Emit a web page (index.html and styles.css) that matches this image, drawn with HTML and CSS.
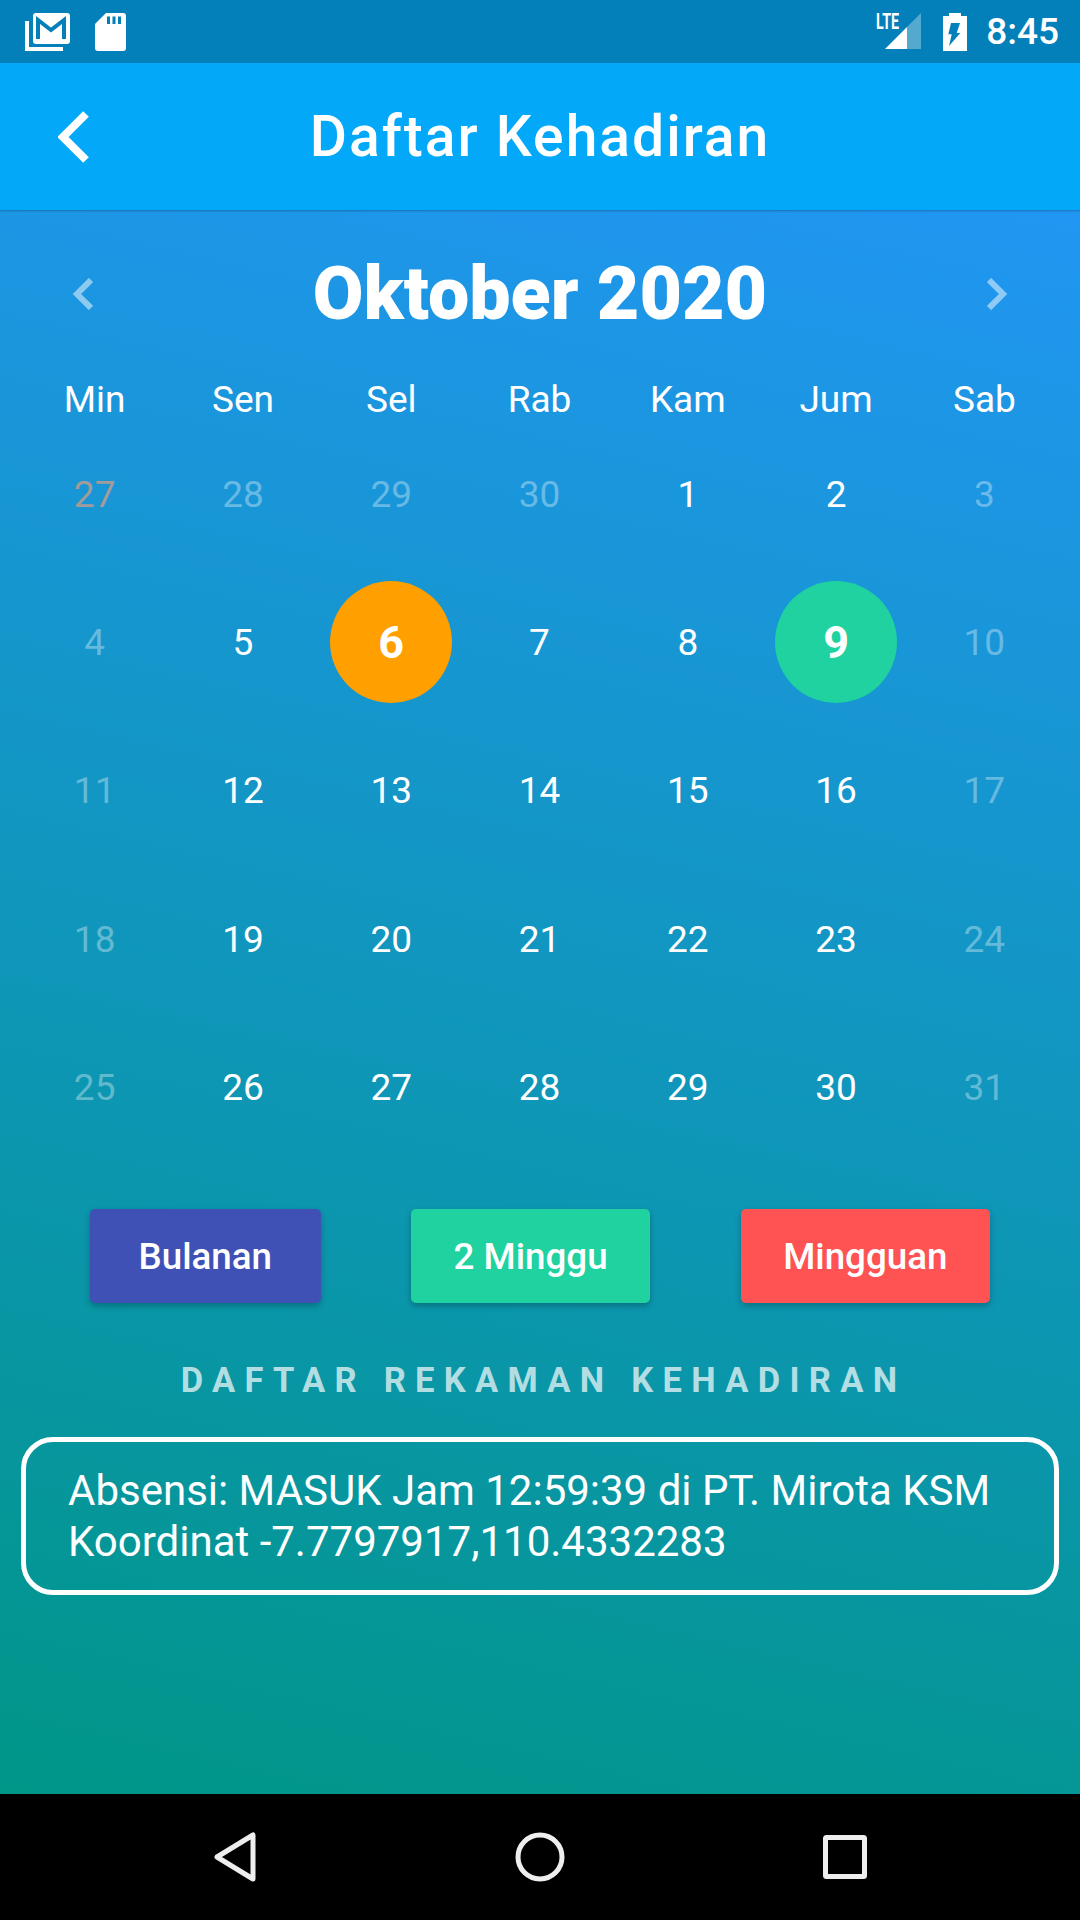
FILE: index.html
```html
<!DOCTYPE html>
<html lang="en">
<head>
    <meta charset="UTF-8">
    <meta name="viewport" content="width=device-width, initial-scale=1.0">
    <title>Daftar Kehadiran</title>
    <link rel="stylesheet" href="styles.css">
</head>
<body>
    <div class="screen">

        <div class="status-bar">
            <svg class="icon-gmail" width="45" height="38" viewBox="0 0 45 38">
                <path d="M2 8V36H38" fill="none" stroke="#fff" stroke-width="4"/>
                <rect x="8" y="0" width="37" height="31" rx="3" fill="#fff"/>
                <path d="M13 26V7L26 17L39 7V26" fill="none" stroke="#0380b9" stroke-width="4"/>
            </svg>
            <svg class="icon-sd" width="31" height="38" viewBox="0 0 31 38">
                <path d="M11 0H28Q31 0 31 3V35Q31 38 28 38H3Q0 38 0 35V11Z" fill="#fff"/>
                <path d="M12 3.500H15V11H12ZM17.500 3.500H20.500V11H17.500ZM23 3.500H26V11H23Z" fill="#0380b9"/>
            </svg>
            <div class="status-right">
                <svg class="icon-signal" width="46" height="37" viewBox="0 0 46 37">
                    <path d="M45 0V36H31V14Z" fill="#fff" opacity="0.32"/>
                    <path d="M31 14V36H9Z" fill="#fff"/>
                    <text class="lte" x="0" y="16" textLength="23" lengthAdjust="spacingAndGlyphs">LTE</text>
                </svg>
                <svg class="icon-battery" width="24" height="38" viewBox="0 0 24 38">
                    <path d="M6 0H18V3H24V38H0V3H6Z" fill="#fff"/>
                    <path d="M8 10H17L13.700 20H17.300L6 33L8.700 21.300H5.300Z" fill="#0380b9"/>
                </svg>
                <span class="clock">8:45</span>
            </div>
        </div>

        <div class="app-bar">
            <svg class="back" width="31" height="52" viewBox="0 0 31 52">
                <path d="M28 3L5 26L28 49" fill="none" stroke="#fff" stroke-width="8"/>
            </svg>
            <h1>Daftar Kehadiran</h1>
        </div>

        <div class="content">
            <div class="month-row">
                <svg class="arrow" width="20" height="32" viewBox="0 0 20 32">
                    <path d="M18 2L4 16L18 30" fill="none" stroke="#fff" stroke-width="6"/>
                </svg>
                <div class="month">Oktober 2020</div>
                <svg class="arrow arrow-next" width="20" height="32" viewBox="0 0 20 32">
                    <path d="M2 2L16 16L2 30" fill="none" stroke="#fff" stroke-width="6"/>
                </svg>
            </div>

            <div class="week-names">
                <div>Min</div><div>Sen</div><div>Sel</div><div>Rab</div><div>Kam</div><div>Jum</div><div>Sab</div>
            </div>

            <div class="days">
                <div class="day prev-sun">27</div>
                <div class="day off">28</div>
                <div class="day off">29</div>
                <div class="day off">30</div>
                <div class="day">1</div>
                <div class="day">2</div>
                <div class="day off">3</div>

                <div class="day off">4</div>
                <div class="day">5</div>
                <div class="day"><span class="mark mark-orange">6</span></div>
                <div class="day">7</div>
                <div class="day">8</div>
                <div class="day"><span class="mark mark-green">9</span></div>
                <div class="day off">10</div>

                <div class="day off">11</div>
                <div class="day">12</div>
                <div class="day">13</div>
                <div class="day">14</div>
                <div class="day">15</div>
                <div class="day">16</div>
                <div class="day off">17</div>

                <div class="day off">18</div>
                <div class="day">19</div>
                <div class="day">20</div>
                <div class="day">21</div>
                <div class="day">22</div>
                <div class="day">23</div>
                <div class="day off">24</div>

                <div class="day off">25</div>
                <div class="day">26</div>
                <div class="day">27</div>
                <div class="day">28</div>
                <div class="day">29</div>
                <div class="day">30</div>
                <div class="day off">31</div>
            </div>

            <div class="buttons">
                <button class="btn btn-month">Bulanan</button>
                <button class="btn btn-two">2 Minggu</button>
                <button class="btn btn-week">Mingguan</button>
            </div>

            <h2>DAFTAR REKAMAN KEHADIRAN</h2>

            <div class="record">
                Absensi: MASUK Jam 12:59:39 di PT. Mirota KSM<br>
                Koordinat -7.7797917,110.4332283
            </div>
        </div>

        <div class="nav-bar">
            <div class="nav-item">
                <svg width="42" height="50" viewBox="0 0 42 50">
                    <path d="M39 3V47L3 25Z" fill="none" stroke="#eee" stroke-width="5" stroke-linejoin="round"/>
                </svg>
            </div>
            <div class="nav-item">
                <svg width="50" height="50" viewBox="0 0 50 50">
                    <circle cx="25" cy="25" r="22" fill="none" stroke="#eee" stroke-width="5"/>
                </svg>
            </div>
            <div class="nav-item">
                <svg width="44" height="44" viewBox="0 0 44 44">
                    <rect x="2.500" y="2.500" width="39" height="39" rx="1" fill="none" stroke="#eee" stroke-width="5"/>
                </svg>
            </div>
        </div>

    </div>
</body>
</html>
```

FILE: styles.css
```css
body {
    margin: 0;
    font-family: Roboto, "Liberation Sans", sans-serif;
    color: #fff;
}
.screen {
    width: 1080px;
    height: 1920px;
    display: flex;
    flex-direction: column;
    overflow: hidden;
}

/* status bar */
.status-bar {
    height: 63px;
    flex: none;
    background-color: #0380b9;
    display: flex;
    align-items: center;
    padding: 0 21px 0 25px;
    box-sizing: border-box;
}
.icon-sd {
    margin-left: 25px;
}
.status-right {
    margin-left: auto;
    display: flex;
    align-items: center;
}
.lte {
    font-size: 22px;
    font-weight: 700;
    fill: #fff;
}
.icon-signal {
    margin-right: 21px;
    overflow: visible;
}
.clock {
    margin-left: 19px;
    font-size: 37px;
    font-weight: 500;
}

/* app bar */
.app-bar {
    height: 147px;
    flex: none;
    background-color: #03a9f8;
    display: grid;
    grid-template-columns: 1fr auto 1fr;
    align-items: center;
    box-shadow: 0 1px 2px rgba(0, 0, 0, 0.25);
    position: relative;
}
.back {
    margin-left: 58px;
}
.app-bar h1 {
    margin: 0;
    font-size: 57px;
    font-weight: 500;
    letter-spacing: 2px;
}

/* main area */
.content {
    flex: 1;
    padding: 30px 21px 0;
    background: linear-gradient(193deg, #2196f3, #009688);
}
.month-row {
    height: 108px;
    display: grid;
    grid-template-columns: 1fr auto 1fr;
    align-items: center;
    margin-bottom: 31px;
}
.arrow {
    margin-left: 52px;
    opacity: 0.5;
}
.arrow-next {
    margin-left: auto;
    margin-right: 52px;
}
.month {
    font-size: 73.500px;
    font-weight: 900;
}
.week-names {
    display: grid;
    grid-template-columns: repeat(7, 1fr);
    height: 41px;
    line-height: 42px;
    margin: 0 0.500px 0 -0.500px;
    text-align: center;
    font-size: 37px;
}
.days {
    display: grid;
    grid-template-columns: repeat(7, 1fr);
    grid-auto-rows: 148.3px;
    margin: 0 0.500px 0 -0.500px;
    font-size: 37px;
}
.day {
    display: flex;
    align-items: center;
    justify-content: center;
}
.off {
    color: rgba(255, 255, 255, 0.35);
}
.prev-sun {
    color: #a39a9a;
}
.mark {
    width: 122px;
    height: 122px;
    border-radius: 50%;
    display: flex;
    align-items: center;
    justify-content: center;
    font-size: 45px;
    font-weight: 700;
}
.mark-orange {
    background-color: #ff9f00;
}
.mark-green {
    background-color: #1fd2a0;
}

.buttons {
    display: flex;
    justify-content: space-between;
    padding: 0 69px;
    margin-top: 48px;
}
.btn {
    height: 94px;
    border: none;
    border-radius: 5px;
    color: #fff;
    font-family: inherit;
    font-size: 36.750px;
    font-weight: 500;
    box-shadow: 0 3px 6px rgba(0, 0, 0, 0.25);
}
.btn-month {
    padding: 0 48.500px;
    background-color: #3f51b5;
}
.btn-two {
    padding: 0 42.500px;
    background-color: #1fd2a0;
}
.btn-week {
    padding: 0 42.500px;
    background-color: #ff5252;
}

h2 {
    margin: 56px 0 0;
    padding-left: 7px;
    font-size: 34.500px;
    line-height: 42px;
    font-weight: 700;
    text-align: center;
    letter-spacing: 9.300px;
    color: rgba(255, 255, 255, 0.7);
}
.record {
    margin-top: 36px;
    padding: 23px 20px 23px 42px;
    border: 5px solid #fff;
    border-radius: 32px;
    font-size: 42px;
    line-height: 51px;
}

/* navigation bar */
.nav-bar {
    height: 126px;
    flex: none;
    background-color: #000;
    display: flex;
    justify-content: center;
    align-items: center;
}
.nav-item {
    width: 305px;
    display: flex;
    justify-content: center;
}
```
